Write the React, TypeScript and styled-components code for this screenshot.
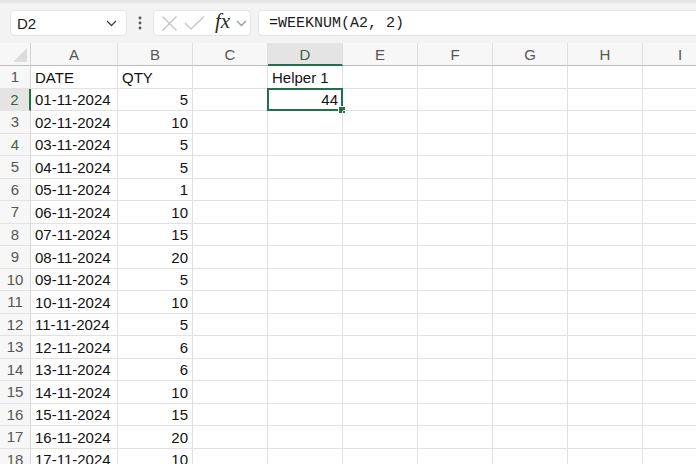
import React from "react";
import styled, { createGlobalStyle, css } from "styled-components";

const GREEN = "#1f7246";

const rows: [string, number][] = [
  ["01-11-2024", 5],
  ["02-11-2024", 10],
  ["03-11-2024", 5],
  ["04-11-2024", 5],
  ["05-11-2024", 1],
  ["06-11-2024", 10],
  ["07-11-2024", 15],
  ["08-11-2024", 20],
  ["09-11-2024", 5],
  ["10-11-2024", 10],
  ["11-11-2024", 5],
  ["12-11-2024", 6],
  ["13-11-2024", 6],
  ["14-11-2024", 10],
  ["15-11-2024", 15],
  ["16-11-2024", 20],
  ["17-11-2024", 10],
];

const columns = ["A", "B", "C", "D", "E", "F", "G", "H", "I"];

const Chevron = ({ color = "#555" }: { color?: string }) => (
  <svg width="11" height="7" viewBox="0 0 11 7">
    <path d="M1 1 L5.5 5.5 L10 1" fill="none" stroke={color} strokeWidth="1.3" />
  </svg>
);

const App = () => {
  return (
    <Page>
      <GlobalStyle />
      <Toolbar>
        <NameBox>
          <span>D2</span>
          <Chevron color="#444" />
        </NameBox>
        <Dots>
          <svg width="4" height="14" viewBox="0 0 4 14">
            <circle cx="2" cy="2" r="1.4" fill="#555" />
            <circle cx="2" cy="7" r="1.4" fill="#555" />
            <circle cx="2" cy="12" r="1.4" fill="#555" />
          </svg>
        </Dots>
        <FuncBox>
          <svg width="17" height="17" viewBox="0 0 17 17">
            <path d="M1.5 1.5 L15.5 15.5 M15.5 1.5 L1.5 15.5" stroke="#c4c4c4" strokeWidth="1.3" />
          </svg>
          <svg width="21" height="16" viewBox="0 0 21 16">
            <path d="M1 8 L7 14 L20 1.5" fill="none" stroke="#c4c4c4" strokeWidth="1.3" />
          </svg>
          <Fx>fx</Fx>
          <Chevron color="#999" />
        </FuncBox>
        <FormulaInput>=WEEKNUM(A2, 2)</FormulaInput>
      </Toolbar>
      <Sheet>
        <Corner>
          <svg width="14" height="14" viewBox="0 0 14 14">
            <path d="M14 0 L14 14 L0 14 Z" fill="#dcdcdc" />
          </svg>
        </Corner>
        {columns.map((c) => (
          <HeadCell key={c} $active={c === "D"}>
            {c}
          </HeadCell>
        ))}
        <RowHead>1</RowHead>
        <Cell>DATE</Cell>
        <Cell>QTY</Cell>
        <Cell />
        <Cell>Helper 1</Cell>
        {columns.slice(4).map((c) => (
          <Cell key={c} />
        ))}
        {rows.map(([date, qty], i) => (
          <React.Fragment key={date}>
            <RowHead $active={i === 0}>{i + 2}</RowHead>
            <Cell>{date}</Cell>
            <Cell $num>{qty}</Cell>
            <Cell />
            {i === 0 ? (
              <Cell $num $selected>
                44
              </Cell>
            ) : (
              <Cell />
            )}
            {columns.slice(4).map((c) => (
              <Cell key={c} />
            ))}
          </React.Fragment>
        ))}
      </Sheet>
    </Page>
  );
};

export default App;

const GlobalStyle = createGlobalStyle`
  html, body {
    margin: 0;
    padding: 0;
    background: #ffffff;
    overflow: hidden;
  }
  * {
    box-sizing: border-box;
  }
`;

const Page = styled.div`
  width: 696px;
  height: 464px;
  overflow: hidden;
  font-family: "Liberation Sans", Arial, sans-serif;
  color: #111;
`;

const Toolbar = styled.div`
  display: flex;
  align-items: center;
  height: 43px;
  padding: 0 0 0 10px;
  background: #f3f3f3;
  border-top: 3px solid #e6e6e6;
`;

const NameBox = styled.div`
  display: flex;
  align-items: center;
  justify-content: space-between;
  width: 117px;
  height: 26px;
  padding: 0 9px 0 6px;
  background: #ffffff;
  border: 1px solid #e4e4e4;
  border-radius: 4px;
  font-size: 15px;
  color: #1a1a1a;
`;

const Dots = styled.div`
  display: flex;
  align-items: center;
  justify-content: center;
  width: 26px;
  height: 26px;
`;

const FuncBox = styled.div`
  display: flex;
  align-items: center;
  justify-content: space-between;
  width: 98px;
  height: 26px;
  padding: 0 3px 0 7px;
  background: #ffffff;
  border: 1px solid #e4e4e4;
  border-radius: 4px;
`;

const Fx = styled.span`
  font-family: "Liberation Serif", "Times New Roman", serif;
  font-style: italic;
  font-size: 21px;
  color: #2a2a2a;
  line-height: 1;
  margin: -3px 0 0 4px;
`;

const FormulaInput = styled.div`
  flex: 1;
  display: flex;
  align-items: center;
  height: 26px;
  margin-left: 7px;
  padding-left: 10px;
  background: #ffffff;
  border: 1px solid #e4e4e4;
  border-right: none;
  border-radius: 4px 0 0 4px;
  font-family: "Liberation Mono", "Courier New", monospace;
  font-size: 15px;
  color: #1a1a1a;
`;

const Sheet = styled.div`
  display: grid;
  grid-template-columns: 31px 87px repeat(8, 75px);
  grid-template-rows: 23px;
  grid-auto-rows: 22.5px;
  font-size: 15px;
`;

const Corner = styled.div`
  display: flex;
  align-items: flex-end;
  justify-content: flex-end;
  padding: 0 3px 3px 0;
  background: #f7f7f7;
  border-right: 1px solid #d4d4d4;
  border-bottom: 1px solid #bdbdbd;
`;

const HeadCell = styled.div<{ $active?: boolean }>`
  display: flex;
  align-items: center;
  justify-content: center;
  padding-top: 1px;
  background: ${(p) => (p.$active ? "#e4e4e4" : "#f7f7f7")};
  border-right: 1px solid #dedede;
  border-bottom: ${(p) => (p.$active ? `2px solid ${GREEN}` : "1px solid #bdbdbd")};
  color: ${(p) => (p.$active ? "#3d5f4b" : "#555")};
  font-size: 15px;
`;

const RowHead = styled.div<{ $active?: boolean }>`
  display: flex;
  align-items: center;
  justify-content: center;
  background: ${(p) => (p.$active ? "#e4e4e4" : "#f7f7f7")};
  border-right: ${(p) => (p.$active ? `2px solid ${GREEN}` : "1px solid #d4d4d4")};
  border-bottom: 1px solid #e3e3e3;
  color: ${(p) => (p.$active ? "#3d5f4b" : "#555")};
`;

const Cell = styled.div<{ $num?: boolean; $selected?: boolean }>`
  position: relative;
  display: flex;
  align-items: center;
  justify-content: ${(p) => (p.$num ? "flex-end" : "flex-start")};
  padding: 1px 4px 0 4px;
  border-right: 1px solid #e1e1e1;
  border-bottom: 1px solid #e1e1e1;
  white-space: nowrap;

  ${(p) =>
    p.$selected &&
    css`
      &::before {
        content: "";
        position: absolute;
        inset: -1px;
        border: 2px solid ${GREEN};
      }
      &::after {
        content: "";
        position: absolute;
        right: -4px;
        bottom: -4px;
        width: 6px;
        height: 6px;
        background: ${GREEN};
        border: 1px solid #ffffff;
      }
    `}
`;
